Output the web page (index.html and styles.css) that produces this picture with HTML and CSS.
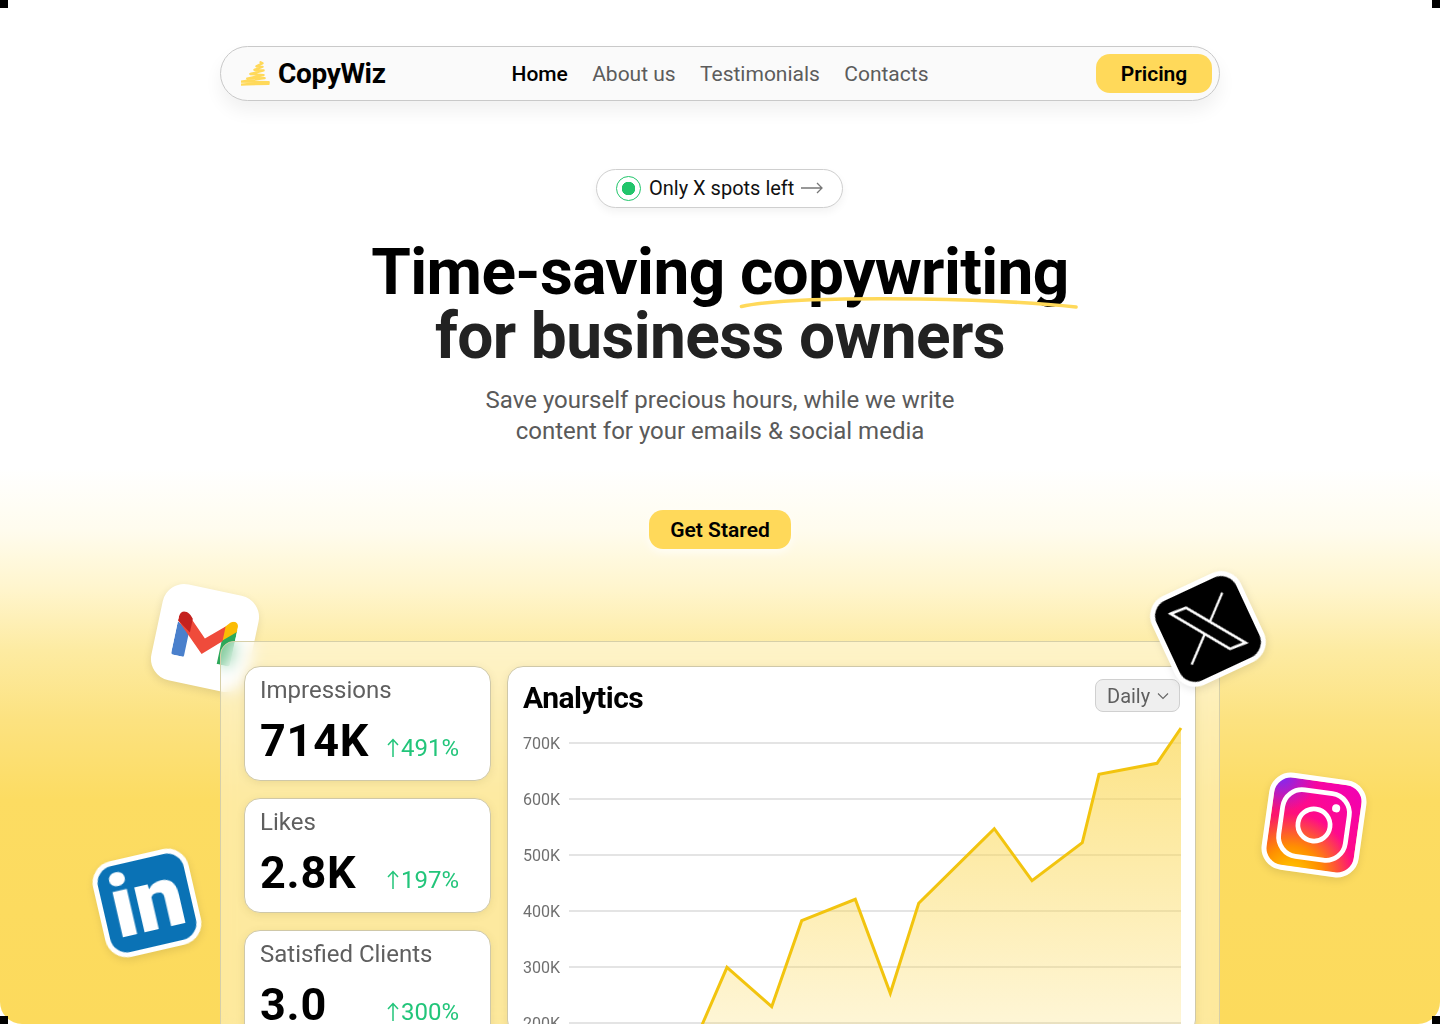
FILE: index.html
```html
<!DOCTYPE html>
<html lang="en">
<head>
<meta charset="utf-8">
<title>CopyWiz</title>
<link rel="stylesheet" href="styles.css">
</head>
<body>
<div class="page">
  <div class="backdrop"></div>
  <span class="corner corner-tl"></span><span class="corner corner-tr"></span>
  <span class="corner corner-bl"></span><span class="corner corner-br"></span>
  <header class="nav">
    <a class="brand">
      <svg class="brand-mark" viewBox="0 0 36 27"><path d="M19 2l2 1-6 3 6 .500-8 3 9 .500-13 3.500 13 1-16 3.500 17-.500-23 3.500 27 .500-30 2.500 9-.500 21-.500" fill="none" stroke="#FFD95A" stroke-width="2.200" stroke-linecap="round" stroke-linejoin="round"/></svg>
      <span class="brand-name">CopyWiz</span>
    </a>
    <nav class="nav-links">
      <a class="nav-link nav-link-active">Home</a>
      <a class="nav-link">About us</a>
      <a class="nav-link">Testimonials</a>
      <a class="nav-link">Contacts</a>
    </nav>
    <a class="pricing">Pricing</a>
  </header>

  <main class="hero">
    <a class="badge">
      <span class="badge-dot"></span>
      <span class="badge-text">Only X spots left</span>
      <svg class="badge-arrow" viewBox="0 0 22 12"><path d="M0 6h21M16 1l5 5-5 5" fill="none" stroke="#777" stroke-width="1.300"/></svg>
    </a>
    <h1 class="title">
      <span class="title-line">Time-saving <span class="mark">copywriting<svg class="scribble" viewBox="0 0 340 16"><path d="M1.500 12.500C30 6 90 4 180 5c60 1 110 3 156 8" fill="none" stroke="#FFD95A" stroke-width="3.600" stroke-linecap="round"/></svg></span></span>
      <span class="title-line title-dark">for business owners</span>
    </h1>
    <p class="lead">Save yourself precious hours, while we write<br>content for your emails &amp; social media</p>
    <a class="cta">Get Stared</a>
  </main>

  <div class="stage">
    <div class="tile tile-gmail">
      <svg viewBox="0 0 64 48" class="gmail-svg">
        <path d="M0 12L14 20V46a2 2 0 0 1-2 2H3a3 3 0 0 1-3-3z" fill="#4A80CC"/>
        <path d="M50 22L64 8V45a3 3 0 0 1-3 3H50z" fill="#2DA85A"/>
        <path d="M50 8l5-6c4-4 9-2 9 4v4L50 23z" fill="#FBBC04"/>
        <path d="M11 4L32 24 51 7V23L32 41 0 11 3 3z" fill="#EF4B3B"/>
        <path d="M0 7c0-7 7-9 12-4l3 3V21L0 11z" fill="#C5221F"/>
      </svg>
    </div>

    <section class="panel">
      <div class="stats">
        <article class="stat">
          <h2 class="stat-label">Impressions</h2>
          <div class="stat-row"><strong class="stat-value">714K</strong><span class="stat-delta"><svg class="up" viewBox="0 0 12 20"><path d="M6 19V1.500M1 7l5-5.500L11 7" fill="none" stroke="currentColor" stroke-width="1.500"/></svg>491%</span></div>
        </article>
        <article class="stat">
          <h2 class="stat-label">Likes</h2>
          <div class="stat-row"><strong class="stat-value">2.8K</strong><span class="stat-delta"><svg class="up" viewBox="0 0 12 20"><path d="M6 19V1.500M1 7l5-5.500L11 7" fill="none" stroke="currentColor" stroke-width="1.500"/></svg>197%</span></div>
        </article>
        <article class="stat">
          <h2 class="stat-label">Satisfied Clients</h2>
          <div class="stat-row"><strong class="stat-value">3.0</strong><span class="stat-delta"><svg class="up" viewBox="0 0 12 20"><path d="M6 19V1.500M1 7l5-5.500L11 7" fill="none" stroke="currentColor" stroke-width="1.500"/></svg>300%</span></div>
        </article>
      </div>

      <section class="chart-card">
        <div class="chart-head">
          <h2 class="chart-title">Analytics</h2>
          <button class="select">Daily<svg class="chev" viewBox="0 0 12 8"><path d="M1 1.500l5 5 5-5" fill="none" stroke="#666" stroke-width="1.100"/></svg></button>
        </div>
        <div class="chart">
          <div class="grid-row"><span class="grid-label">700K</span><span class="grid-line"></span></div>
          <div class="grid-row"><span class="grid-label">600K</span><span class="grid-line"></span></div>
          <div class="grid-row"><span class="grid-label">500K</span><span class="grid-line"></span></div>
          <div class="grid-row"><span class="grid-label">400K</span><span class="grid-line"></span></div>
          <div class="grid-row"><span class="grid-label">300K</span><span class="grid-line"></span></div>
          <div class="grid-row"><span class="grid-label">200K</span><span class="grid-line"></span></div>
          <svg class="plot" viewBox="0 0 612 320">
            <defs><linearGradient id="area" x1="0" y1="0" x2="0" y2="1"><stop offset="0" stop-color="#FBD751" stop-opacity=".7"/><stop offset="1" stop-color="#FBD751" stop-opacity=".2"/></linearGradient></defs>
            <path d="M123 320L158 239.300 202.700 278.700 232.700 192.700 286.300 171.300 321.300 265.300 349.700 175.300 425.300 100.700 463 152.700 513.300 114.700 530 46.300 588 35.300 612 0V320z" fill="url(#area)"/>
            <path d="M123 320L158 239.300 202.700 278.700 232.700 192.700 286.300 171.300 321.300 265.300 349.700 175.300 425.300 100.700 463 152.700 513.300 114.700 530 46.300 588 35.300 612 0" fill="none" stroke="#F2C40F" stroke-width="3"/>
          </svg>
        </div>
      </section>
    </section>

    <div class="tile tile-x">
      <svg viewBox="-44 -44 88 88" class="x-svg"><path d="M-27.400-29.600L-10.900-28.500 28.400 28.400 11.500 27.200z" fill="none" stroke="#fff" stroke-width="2.600"/><path d="M28.300-26.800L4.800-5.750M-5 3.050L-29.800 25.300" fill="none" stroke="#fff" stroke-width="2.300"/></svg>
    </div>
    <div class="tile tile-ig">
      <svg viewBox="0 0 60 60" class="ig-svg"><rect x="6" y="6" width="48" height="48" rx="14" fill="none" stroke="#fff" stroke-width="3.400"/><circle cx="30" cy="30" r="11.500" fill="none" stroke="#fff" stroke-width="3.400"/><circle cx="44" cy="16" r="2.900" fill="#fff"/></svg>
    </div>
    <div class="tile tile-in"><span class="in-text">in</span></div>
  </div>
</div>
</body>
</html>
```

FILE: styles.css
```css
* { box-sizing: border-box; }
html, body { margin: 0; height: 1024px; overflow: hidden; }
body { font-family: Roboto, "Liberation Sans", sans-serif; background: #fff; color: #000; }
h1, h2, p { margin: 0; font: inherit; }
a { color: inherit; text-decoration: none; }

.page {
  position: relative;
  width: 1440px;
  height: 1024px;
  overflow: hidden;
  padding-top: 46px;
  display: flex;
  flex-direction: column;
  align-items: center;
}
.backdrop {
  position: absolute;
  inset: 0;
  border-radius: 0 0 22px 22px;
  background: linear-gradient(180deg, #fff 0, #fff 468px, #FFFCEE 530px, #FFF5CC 590px, #FDEBA2 650px, #FCE280 720px, #FCDC62 800px, #FCDA5C 1024px);
}
.corner { position: absolute; width: 8px; height: 8px; background: #000; }
.corner-tl { top: 0; left: 0; }
.corner-tr { top: 0; right: 0; }
.corner-bl { bottom: 0; left: 0; }
.corner-br { bottom: 0; right: 0; }

.nav {
  position: relative;
  width: 1000px;
  height: 55px;
  flex: none;
  display: grid;
  grid-template-columns: 1fr auto 1fr;
  align-items: center;
  padding: 0 7px;
  background: #FAFAFA;
  border: 1px solid #C9C9C9;
  border-radius: 28px;
  box-shadow: 0 10px 18px rgba(0, 0, 0, .06);
}
.brand { display: flex; align-items: center; gap: 1px; margin-left: 13px; }
.brand-mark { width: 37px; height: 28px; margin-top: 1px; }
.brand-name { font-size: 28px; font-weight: 700; letter-spacing: -.35px; margin-left: -1px; }
.nav-links { display: flex; gap: 24.300px; font-size: 21px; color: #5C5C5C; }
.nav-link-active { color: #000; font-weight: 500; }
.pricing {
  justify-self: end;
  width: 116px;
  height: 39px;
  display: flex;
  align-items: center;
  justify-content: center;
  background: #FFD95A;
  border-radius: 14px;
  font-size: 21px;
  font-weight: 600;
}

.hero { position: relative; display: flex; flex-direction: column; align-items: center; flex: none; }
.badge {
  margin-top: 68px;
  margin-right: 1px;
  height: 39px;
  width: 247px;
  display: flex;
  align-items: center;
  padding-left: 19px;
  gap: 8px;
  background: #fff;
  border: 1px solid #CFCFCF;
  border-radius: 20px;
  box-shadow: 0 4px 8px rgba(0, 0, 0, .05);
  font-size: 20px;
  color: #111;
}
.badge-text { margin-top: -2px; }
.badge-dot {
  width: 25px;
  height: 25px;
  border-radius: 50%;
  border: 1px solid #22C56B;
  background: radial-gradient(circle, #22C56B 0 6.500px, #fff 7px);
}
.badge-arrow { width: 22px; height: 12px; margin-left: -1px; margin-top: -2px; }

.title {
  margin-top: 33px;
  font-size: 64px;
  line-height: 64px;
  font-weight: 700;
  text-align: center;
  letter-spacing: -.63px;
}
.title-line { display: block; }
.title-dark { color: #222; }
.mark { position: relative; display: inline-block; }
.scribble { position: absolute; left: 0; top: 53px; width: 340px; height: 16px; overflow: visible; }
.lead { margin-top: 16px; font-size: 24px; line-height: 31px; text-align: center; color: #5A5A5A; }
.cta {
  margin-top: 63px;
  width: 142px;
  height: 39px;
  display: flex;
  align-items: center;
  justify-content: center;
  background: #FFD95A;
  border-radius: 14px;
  font-size: 21px;
  font-weight: 600;
  box-shadow: 0 3px 10px rgba(255, 255, 255, .8);
}

.stage { position: absolute; inset: 0; pointer-events: none; }
.tile {
  position: absolute;
  width: 98px;
  height: 98px;
  border-radius: 22px;
  border: 5px solid #fff;
  display: flex;
  align-items: center;
  justify-content: center;
  box-shadow: 0 3px 8px rgba(0, 0, 0, .1);
}
.tile-gmail { left: 156px; top: 589px; background: #fff; transform: rotate(12deg); }
.gmail-svg { width: 60px; height: 45px; }
.tile-x { left: 1159px; top: 580px; background: #000; transform: rotate(-25deg); }
.x-svg { width: 88px; height: 88px; flex: none; }
.tile-ig {
  left: 1265px;
  top: 776px;
  transform: rotate(8deg);
  background:
    radial-gradient(circle at 6% 0%, #7A2BF5 0, rgba(122, 43, 245, 0) 30%),
    radial-gradient(circle at 32% 112%, #FFD400 0, #FF9000 26%, rgba(255, 60, 60, 0) 55%),
    linear-gradient(35deg, #F62A3A 0%, #FF0A8A 55%, #F000B8 100%);
}
.ig-svg { width: 84px; height: 84px; flex: none; }
.tile-in { left: 98px; top: 854px; background: #0A72B5; transform: rotate(-13deg); }
.in-text { font-size: 88px; line-height: 1; font-weight: 900; color: #fff; letter-spacing: -1px; margin-top: -4px; }

.panel {
  position: absolute;
  left: 220px;
  top: 641px;
  width: 1000px;
  height: 420px;
  padding: 24px 23px;
  display: flex;
  gap: 16px;
  border: 1px solid #D6CFA8;
  border-radius: 14px;
  background: rgba(255, 255, 255, .4);
  backdrop-filter: blur(8px);
}
.stats { width: 247px; flex: none; display: flex; flex-direction: column; gap: 17px; }
.stat {
  height: 115px;
  flex: none;
  padding: 7px 15px;
  background: #fff;
  border: 1px solid #CFC8A8;
  border-radius: 16px;
  box-shadow: 0 2px 8px rgba(90, 70, 0, .1);
}
.stat-label { font-size: 24px; line-height: 32px; color: #5F5F5F; }
.stat-row { display: flex; align-items: baseline; margin-top: 6px; }
.stat-value { width: 127px; font-size: 45px; line-height: 58px; font-weight: 700; letter-spacing: .8px; }
.stat-delta { display: flex; align-items: baseline; font-size: 24px; color: #22C57A; }
.up { width: 12px; height: 20px; margin-right: 2px; align-self: center; }

.chart-card {
  flex: 1;
  padding: 0 14px 0 15px;
  background: #fff;
  border: 1px solid #CFC8A8;
  border-radius: 16px;
  box-shadow: 0 2px 8px rgba(90, 70, 0, .1);
}
.chart-head { display: flex; justify-content: space-between; align-items: flex-start; padding-top: 13px; height: 48px; }
.chart-title { font-size: 30px; line-height: 36px; font-weight: 700; letter-spacing: -.5px; }
.select {
  display: flex;
  align-items: center;
  gap: 7px;
  width: 85px;
  height: 33px;
  margin-right: 1px;
  margin-top: -1px;
  padding: 0 0 0 11px;
  background: #EFEFEF;
  border: 1px solid #D0D0D0;
  border-radius: 8px;
  font: 20px Roboto, sans-serif;
  color: #5F5F5F;
}
.chev { width: 12px; height: 8px; }
.chart { position: relative; }
.grid-row { display: flex; align-items: center; height: 56px; gap: 8px; }
.grid-label { width: 38px; font-size: 16px; color: #6F6F6F; white-space: nowrap; }
.grid-line { flex: 1; height: 2px; background: #E4E4E4; }
.plot { position: absolute; left: 46px; top: 13px; width: 612px; height: 320px; overflow: visible; }
```
